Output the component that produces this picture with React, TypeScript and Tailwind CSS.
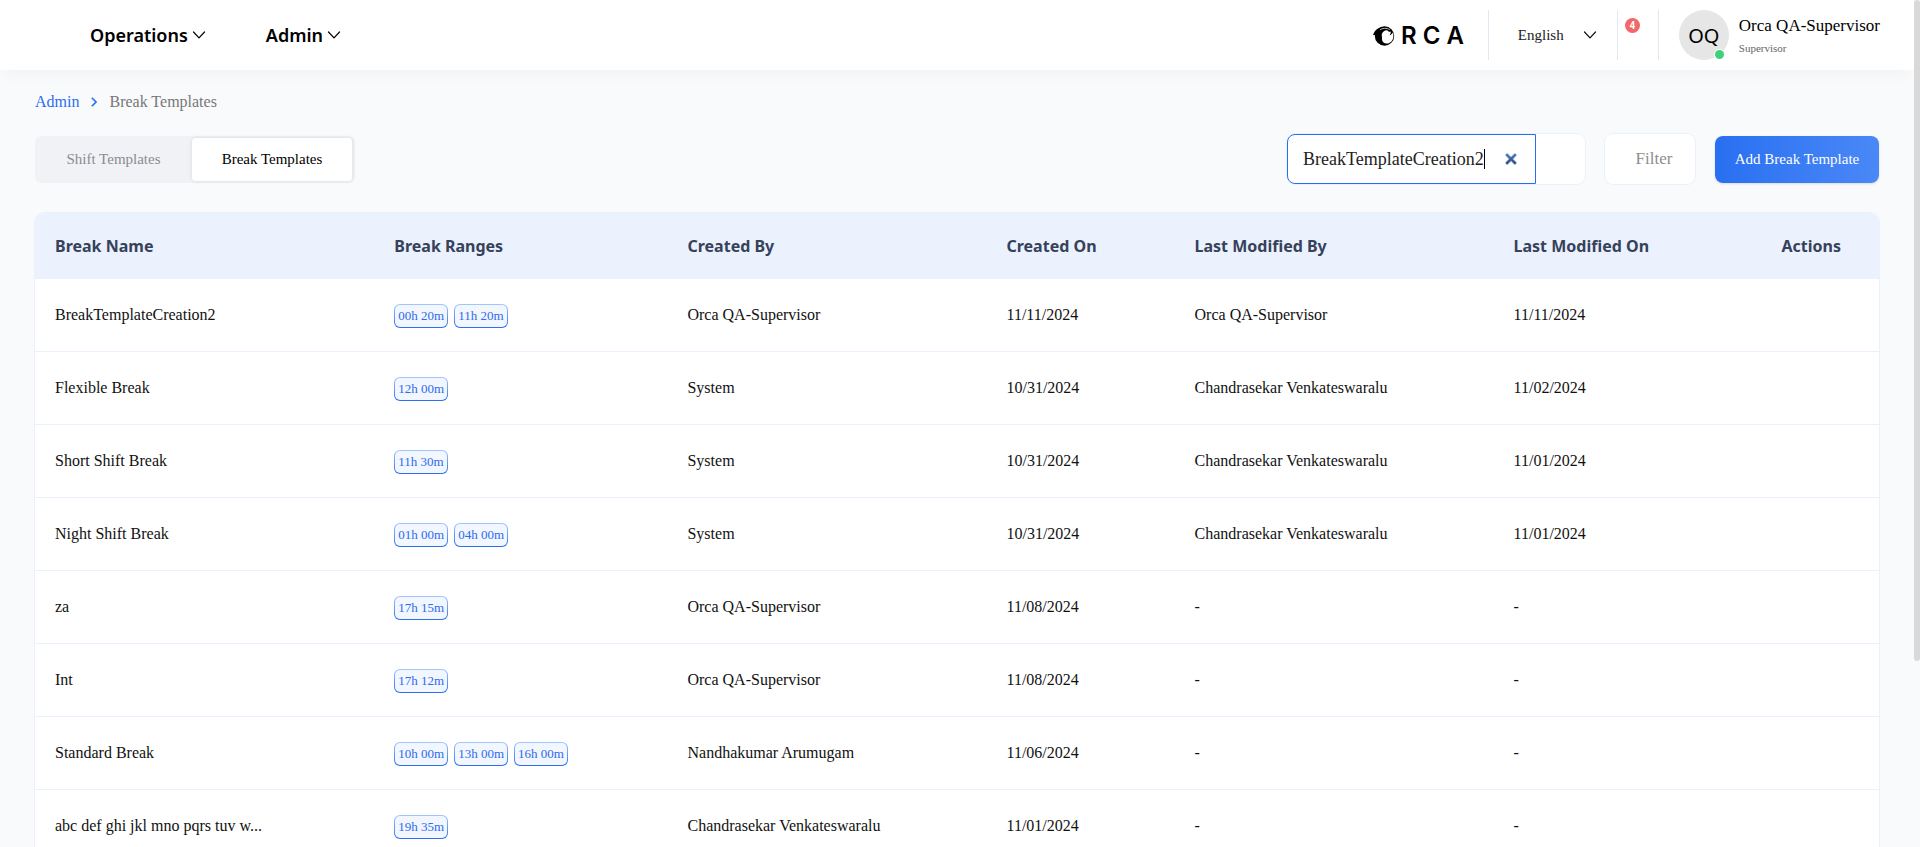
import React, { useState } from "react";

type BreakTemplate = {
  name: string;
  ranges: string[];
  createdBy: string;
  createdOn: string;
  modifiedBy: string;
  modifiedOn: string;
};

const templates: BreakTemplate[] = [
  { name: "BreakTemplateCreation2", ranges: ["00h 20m", "11h 20m"], createdBy: "Orca QA-Supervisor", createdOn: "11/11/2024", modifiedBy: "Orca QA-Supervisor", modifiedOn: "11/11/2024" },
  { name: "Flexible Break", ranges: ["12h 00m"], createdBy: "System", createdOn: "10/31/2024", modifiedBy: "Chandrasekar Venkateswaralu", modifiedOn: "11/02/2024" },
  { name: "Short Shift Break", ranges: ["11h 30m"], createdBy: "System", createdOn: "10/31/2024", modifiedBy: "Chandrasekar Venkateswaralu", modifiedOn: "11/01/2024" },
  { name: "Night Shift Break", ranges: ["01h 00m", "04h 00m"], createdBy: "System", createdOn: "10/31/2024", modifiedBy: "Chandrasekar Venkateswaralu", modifiedOn: "11/01/2024" },
  { name: "za", ranges: ["17h 15m"], createdBy: "Orca QA-Supervisor", createdOn: "11/08/2024", modifiedBy: "-", modifiedOn: "-" },
  { name: "Int", ranges: ["17h 12m"], createdBy: "Orca QA-Supervisor", createdOn: "11/08/2024", modifiedBy: "-", modifiedOn: "-" },
  { name: "Standard Break", ranges: ["10h 00m", "13h 00m", "16h 00m"], createdBy: "Nandhakumar Arumugam", createdOn: "11/06/2024", modifiedBy: "-", modifiedOn: "-" },
  { name: "abc def ghi jkl mno pqrs tuv w...", ranges: ["19h 35m"], createdBy: "Chandrasekar Venkateswaralu", createdOn: "11/01/2024", modifiedBy: "-", modifiedOn: "-" },
];

const columns = [
  { label: "Break Name", className: "w-[18.4%] pl-5 text-left" },
  { label: "Break Ranges", className: "w-[15.9%] pl-5 text-left" },
  { label: "Created By", className: "w-[17.3%] pl-5 text-left" },
  { label: "Created On", className: "w-[10.2%] pl-5 text-left" },
  { label: "Last Modified By", className: "w-[17.3%] pl-5 text-left" },
  { label: "Last Modified On", className: "pl-5 text-left" },
  { label: "Actions", className: "w-[8%] pr-[38px] text-right" },
];

const cell = "h-[73px] border-b border-[#ebf0fd] pl-5";

function ChevronDown({ className }: { className: string }) {
  return (
    <svg viewBox="0 0 14 8" fill="none" stroke="currentColor" strokeWidth="1.2" strokeLinecap="round" strokeLinejoin="round" className={className} aria-hidden="true">
      <path d="M1.500 1L7 6.800 12.500 1" />
    </svg>
  );
}

function Logo() {
  return (
    <div className="flex items-center gap-1.5 pt-0.5 font-['Inter',sans-serif] text-2xl leading-none font-semibold text-black">
      <svg viewBox="0 0 22 20" className="h-5 w-[22px]" aria-hidden="true">
        <circle cx="11.500" cy="10" r="9.700" fill="currentColor" />
        <path d="M0 9.400C1 5 4.500 2 8 1.500L5 12C3.500 9.500 1.800 8.600 0 9.400Z" fill="currentColor" />
        <path d="M14.200 4.300C11.500 4.200 9.200 6 8.800 8.300 8.500 10 9.300 10.600 9 12.300c-.3 2.600 1.500 5 4.200 5.300 4 .2 7.200-3.200 7.200-7.600 0-1.300-.2-2.500-.8-3.600-.6 1.400-1.600 2.300-3 2.900.9-1.200 1.300-2.400 1.100-3.700-1 .4-2.200.2-3.500-1.300Z" fill="#fff" />
        <path d="M7 3.800C9.500 2 13.500 1.700 16.800 3.600" stroke="#fff" strokeWidth=".7" fill="none" />
      </svg>
      <span>R</span>
      <span>C</span>
      <span>A</span>
    </div>
  );
}

function TopBar() {
  return (
    <header className="flex h-[70px] items-center justify-between bg-white pr-[34px] pl-[90px] shadow-[0_12px_10px_-4px_rgba(0,0,0,0.025)]">
      <nav className="flex gap-[60px] font-['Noto_Sans',sans-serif] text-lg font-semibold text-black">
        <button type="button" className="flex items-center gap-1">
          Operations
          <ChevronDown className="h-2 w-3.5" />
        </button>
        <button type="button" className="flex items-center gap-1">
          Admin
          <ChevronDown className="h-2 w-3.5" />
        </button>
      </nav>

      <div className="flex items-center">
        <Logo />
        <div className="ml-6 flex h-[50px] w-[130px] items-center border-x border-[#e6e6f2] pr-5 pl-[29px]">
          <div className="relative flex flex-1 items-center">
            <select aria-label="Language" className="w-full appearance-none bg-transparent text-[15px] text-[#222]">
              <option>English</option>
            </select>
            <ChevronDown className="pointer-events-none absolute right-0 h-2 w-3.5" />
          </div>
        </div>
        <button type="button" aria-label="Notifications" className="flex h-[50px] w-[41px] items-start border-r border-[#e6e6f2] pt-2 pl-[7px]">
          <span className="flex size-[15px] items-center justify-center rounded-full bg-[#f26767] font-['Roboto',sans-serif] text-[10px] leading-none font-bold text-white">4</span>
        </button>
        <div className="ml-5 flex items-center gap-2.5">
          <div className="relative flex size-[50px] items-center justify-center rounded-full bg-[#e6e6e6] pt-0.5 font-['Noto_Sans',sans-serif] text-xl text-black">
            OQ
            <span className="absolute right-[5px] bottom-px size-[9px] rounded-full bg-[#3ed07c] ring-1 ring-white" />
          </div>
          <div className="pt-0.5">
            <div className="text-[17px] leading-6 text-black">Orca QA-Supervisor</div>
            <div className="text-[11px] leading-5 text-[#666]">Supervisor</div>
          </div>
        </div>
      </div>
    </header>
  );
}

function RangeChip({ children }: { children: React.ReactNode }) {
  return (
    <span className="rounded-md bg-linear-to-b from-[#a3c6fd] to-[#2a6df0] p-px">
      <span className="block rounded-[5px] bg-[#f1f6ff] px-[3px] text-[13px] leading-[22px] text-[#2f6bea]">{children}</span>
    </span>
  );
}

export default function App() {
  const [query, setQuery] = useState("BreakTemplateCreation2");

  return (
    <div className="flex h-screen bg-[#f9fafc] font-['Liberation_Serif',serif] text-base text-[#111]">
      <div className="min-w-0 flex-1 overflow-y-auto [scrollbar-width:none]">
        <TopBar />

        <main className="px-[35px] pb-[220px]">
          <nav aria-label="Breadcrumb" className="flex items-center gap-3 pt-5 leading-6">
            <a href="#admin" className="text-[#2a6df0]">Admin</a>
            <svg viewBox="0 0 6 10" fill="none" stroke="#2a6df0" strokeWidth="1.6" className="h-2.5 w-1.5" aria-hidden="true">
              <path d="M.8.8L5 5 .8 9.200" />
            </svg>
            <span className="text-[#777]">Break Templates</span>
          </nav>

          <div className="mt-5 flex items-center justify-between">
            <div className="flex rounded-md bg-[#f1f2f5] py-0.5 pr-[3px] text-[15px]">
              <button type="button" className="h-[43px] w-[157px] text-[#8b8b92]">Shift Templates</button>
              <button type="button" className="h-[43px] w-40 rounded bg-white text-black shadow-[0_0_4px_rgba(0,0,0,0.1)]">Break Templates</button>
            </div>

            <div className="flex items-center">
              <div className="relative flex h-[50px] w-[298px] rounded-lg bg-white shadow-[0_0_0_1px_#ecf0fc]">
                <input
                  type="search"
                  aria-label="Search break templates"
                  autoFocus
                  value={query}
                  onChange={(e) => setQuery(e.target.value)}
                  className="w-[249px] rounded-l-lg border border-[#2a6df0] px-[15px] text-lg text-[#222] caret-transparent outline-none"
                />
                {query === "BreakTemplateCreation2" && <span className="absolute top-[15px] left-[197px] h-5 w-px bg-black" />}
              </div>
              <button type="button" className="ml-5 h-[50px] w-[90px] rounded-lg bg-white pl-2 text-[17px] text-[#8e8e8e] shadow-[0_0_0_1px_#ecf0fc]">Filter</button>
              <button type="button" className="ml-5 h-[47px] w-[164px] rounded-lg bg-linear-to-r from-[#286ff1] to-[#4a88f7] text-[15px] text-white shadow-sm">Add Break Template</button>
            </div>
          </div>

          <div className="mt-[29px] overflow-hidden rounded-[10px] bg-white shadow-[0_0_0_1px_#ebf0fd]">
            <table className="w-full table-fixed border-separate border-spacing-0">
              <thead className="bg-[#ebf2fe] font-['Noto_Sans',sans-serif] text-[#36415a]">
                <tr>
                  {columns.map((c) => (
                    <th key={c.label} scope="col" className={`h-[66px] font-bold ${c.className}`}>
                      {c.label}
                    </th>
                  ))}
                </tr>
              </thead>
              <tbody>
                {templates.map((t) => (
                  <tr key={t.name}>
                    <td className={cell}>{t.name}</td>
                    <td className={cell}>
                      <div className="flex gap-1.5 pt-px">
                        {t.ranges.map((r) => (
                          <RangeChip key={r}>{r}</RangeChip>
                        ))}
                      </div>
                    </td>
                    <td className={cell}>{t.createdBy}</td>
                    <td className={cell}>{t.createdOn}</td>
                    <td className={cell}>{t.modifiedBy}</td>
                    <td className={cell}>{t.modifiedOn}</td>
                    <td className={cell} />
                  </tr>
                ))}
              </tbody>
            </table>
          </div>
        </main>
      </div>

      <div className="w-1.5 shrink-0" aria-hidden="true">
        <div className="h-[78%] rounded-full bg-[#d9d9d9]" />
      </div>
    </div>
  );
}
